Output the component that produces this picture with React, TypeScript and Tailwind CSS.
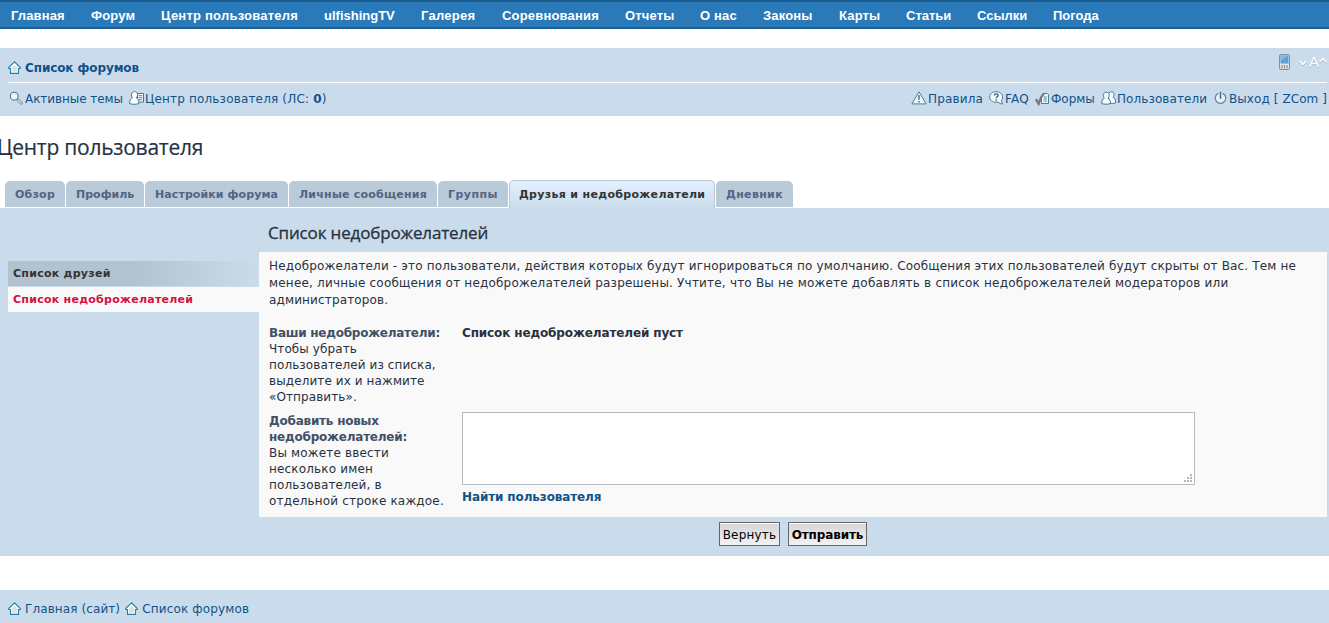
import type { ReactNode } from "react";
import clsx from "clsx";

const navItems = [
  { label: "Главная", className: "w-[54px] tracking-[0.13px]" },
  { label: "Форум", className: "w-[44px] tracking-[0.16px]" },
  { label: "Центр пользователя", className: "w-[137px] tracking-[0.23px]" },
  { label: "ulfishingTV", className: "w-[71px]" },
  { label: "Галерея", className: "w-[55px] tracking-[0.25px]" },
  { label: "Соревнования", className: "w-[97px] tracking-[0.19px]" },
  { label: "Отчеты", className: "w-[49px] tracking-[0.16px]" },
  { label: "О нас", className: "w-[37px] tracking-[0.16px]" },
  { label: "Законы", className: "w-[50px] tracking-[0.16px]" },
  { label: "Карты", className: "w-[41px] tracking-[0.16px]" },
  { label: "Статьи", className: "w-[45px]" },
  { label: "Ссылки", className: "w-[50px]" },
  { label: "Погода", className: "w-[46px]" },
];

const tabs = [
  { label: "Обзор", className: "w-[60px] tracking-[0.23px]" },
  { label: "Профиль", className: "w-[78px]" },
  { label: "Настройки форума", className: "w-[143px] tracking-[0.09px]" },
  { label: "Личные сообщения", className: "w-[148px] tracking-[0.22px]" },
  { label: "Группы", className: "w-[70px] tracking-[0.46px]" },
  { label: "Друзья и недоброжелатели", className: "w-[206px] tracking-[0.32px]", active: true },
  { label: "Дневник", className: "w-[77px] tracking-[0.34px]" },
];

function HomeIcon() {
  return (
    <svg width="13" height="13" viewBox="0 0 13 13" className="mb-0.5 shrink-0">
      <path d="M6.5 .8 .7 6.600v.9h1.800v4.900h8V7.500h1.800v-.9L6.500.8Z" fill="#fff" stroke="#1f80ab" strokeWidth="1.100" />
      <path d="M6.500 4 4 6.600v4.200h5V6.600L6.500 4Z" fill="#e0dfe0" />
    </svg>
  );
}

function SearchIcon() {
  return (
    <svg width="14" height="14" viewBox="0 0 14 14" className="mb-0.5 shrink-0">
      <path d="m8.500 8.500 3.800 3.800" stroke="#64869b" strokeWidth="2.800" strokeLinecap="round" />
      <path d="m9 9 3.200 3.200" stroke="#e9eff3" strokeWidth="1.200" strokeLinecap="round" />
      <circle cx="5.200" cy="5.200" r="3.900" fill="#eef4f8" stroke="#4f7690" strokeWidth="1.100" />
    </svg>
  );
}

function UserCardIcon() {
  return (
    <svg width="16" height="14" viewBox="0 0 16 14" className="mb-0.5 shrink-0">
      <path d="M8.500 2.500h6v8.500h-6z" fill="#fff" stroke="#3c7999" />
      <path d="M9.500 4.700h3.800M9.500 6.700h3.800M9.500 8.700h3.800" stroke="#3c7999" strokeWidth=".9" />
      <path
        d="M3.500 6.700C1.300 7.500.6 9.500.6 12.500c2.700 1.100 6.900 1.100 9.300 0 0-3-.8-5-2.700-5.800 1.300-1.100 1.500-2.500 1.300-3.700C8.100 1.300 7 .6 5.500.6S2.800 1.500 2.500 3c-.2 1.400 0 2.800 1 3.700Z"
        fill="#fff"
        stroke="#3c7999"
      />
    </svg>
  );
}

function WarningIcon() {
  return (
    <svg width="16" height="14" viewBox="0 0 16 14" className="mb-0.5 shrink-0">
      <path d="M8 .8 15.100 12.900H.9L8 .8Z" fill="#f4f9fc" stroke="#447f9e" strokeLinejoin="round" />
      <path d="M8 4v4.800M8 10v1.600" stroke="#447489" strokeWidth="1.500" />
    </svg>
  );
}

function QuestionIcon() {
  return (
    <svg width="15" height="14" viewBox="0 0 15 14" className="mb-0.5 shrink-0">
      <path
        d="M7 .7C3.500.7.7 2.800.7 6s2.800 5.300 6.300 5.300c.7 0 1.400-.1 2-.3 1.200 1.300 2.700 2 4.800 2-.8-1-1.300-2.200-1.400-3.400.8-.9 1.200-2.200 1.200-3.600C13.600 2.800 10.500.7 7 .7Z"
        fill="#f4f9fc"
        stroke="#447f9e"
      />
      <path d="M5.200 4.500c.1-1.100.9-1.700 1.900-1.700 1.200 0 2 .7 2 1.600 0 1.300-1.900 1.400-1.900 2.900" fill="none" stroke="#315f78" strokeWidth="1.300" />
      <path d="M7.200 8.300v1.400" stroke="#315f78" strokeWidth="1.400" />
    </svg>
  );
}

function FormsIcon() {
  return (
    <svg width="15" height="14" viewBox="0 0 15 14" className="shrink-0">
      <path d="M8.500 1.500h3.800l1.200 1.300v8.700h-7V5Z" fill="#f4f9fc" stroke="#447f9e" />
      <path d="M8.500 5h3.500M8.500 7h3.500M8.500 9h3.500" stroke="#447f9e" strokeWidth=".9" />
      <path d="M.8 7.200 3.600 11.700C4.600 7.500 6.200 4.300 9 1.300" fill="none" stroke="#777" strokeWidth="2.200" />
    </svg>
  );
}

function UsersIcon() {
  return (
    <svg width="16" height="14" viewBox="0 0 16 14" className="mb-0.5 shrink-0" fill="#f7fbfd" stroke="#3c7999">
      <path d="M7.500 5.500C6.800 3 8 .7 10.400.7c3 0 3.300 3.800 1.700 5.500 1.900.7 2.600 2.800 2.600 5.600-1.800.9-4.700.9-6.400.2Z" />
      <path d="M3.400 7.200C1.400 8 .7 10 .7 12.600c2.400.8 6.200.8 8.800 0 0-2.600-.8-4.600-2.700-5.400 1.300-1.100 1.500-2.500 1.300-3.700C7.700 1.900 6.600 1.200 5.200 1.200S2.700 2 2.400 3.500c-.2 1.400 0 2.800 1 3.700Z" />
    </svg>
  );
}

function PowerIcon() {
  return (
    <svg width="13" height="14" viewBox="0 0 13 14" className="mb-0.5 shrink-0">
      <circle cx="6.500" cy="7.200" r="5.200" fill="#e6eff5" />
      <path d="M4.300 2.300a5.300 5.300 0 1 0 4.400 0" fill="none" stroke="#63889d" strokeWidth="1.300" />
      <path d="M6.500 .8v7" stroke="#456f87" strokeWidth="1.500" />
    </svg>
  );
}

function PhoneIcon() {
  return (
    <svg width="11" height="16" viewBox="0 0 11 16" className="shrink-0">
      <rect x=".5" y=".5" width="10" height="15" rx="1.500" fill="#e6e6e6" stroke="#8b8f94" />
      <path d="M1.500 1.500h8v8h-8z" fill="#5d9fd6" />
      <path d="M1.500 1.500h8l-8 6z" fill="#83b7e2" />
      <path d="M3 11v3.500M5.500 11v3.500M8 11v3.500" stroke="#9a8a8a" strokeWidth="1.200" />
    </svg>
  );
}

function FontSizeIcon() {
  return (
    <span className="flex h-4 items-center text-white [filter:drop-shadow(0_1px_0_#a3b2bf)]">
      <svg width="8" height="6" viewBox="0 0 8 6" className="mt-0.5" fill="none" stroke="#fff" strokeWidth="1.600">
        <path d="m.7 1 3.300 3.300L7.300 1" />
      </svg>
      <span className="ml-0.5 w-[10px] text-[15px] leading-4 font-['Liberation_Sans',sans-serif]">A</span>
      <svg width="8" height="6" viewBox="0 0 8 6" className="mb-1" fill="none" stroke="#fff" strokeWidth="1.600">
        <path d="m.7 5 3.300-3.300L7.300 5" />
      </svg>
    </span>
  );
}

type IconLinkProps = {
  icon: ReactNode;
  children: ReactNode;
  className?: string;
};

function IconLink({ icon, children, className }: IconLinkProps) {
  return (
    <a href="#" className={clsx("flex shrink-0 items-center whitespace-nowrap text-[#105289]", className)}>
      {icon}
      {children}
    </a>
  );
}

function TopNav() {
  return (
    <nav className="flex h-[29px] gap-[26px] border-t-2 border-b-2 border-t-[#1b5c8f] border-b-[#1f5f92] bg-[#2a7ab9] pl-[11px] font-['Liberation_Sans',Arial,sans-serif] text-[13px] leading-[27px] font-bold text-white">
      {navItems.map((item) => (
        <a key={item.label} href="#" className={clsx("shrink-0 whitespace-nowrap", item.className)}>
          {item.label}
        </a>
      ))}
    </nav>
  );
}

function Header() {
  return (
    <header className="mt-[19px] h-[68px] bg-[#cadceb] pr-0.5 pl-2">
      <div className="flex h-[35px] justify-between border-b border-white">
        <IconLink icon={<HomeIcon />} className="h-[40px] gap-1 font-bold tracking-[-0.1px]">
          <span>Список форумов</span>
        </IconLink>
        <div className="flex h-4 gap-[9px] pt-1.5">
          <PhoneIcon />
          <FontSizeIcon />
        </div>
      </div>
      <div className="flex h-[31px] items-center justify-between">
        <div className="flex gap-1.5 pl-px">
          <IconLink icon={<SearchIcon />} className="w-[114px] gap-0.5 tracking-[-0.07px]">
            <span>Активные темы</span>
          </IconLink>
          <IconLink icon={<UserCardIcon />} className="tracking-[0.17px]">
            <span>
              Центр пользователя (ЛС: <strong>0</strong>)
            </span>
          </IconLink>
        </div>
        <div className="flex">
          <IconLink icon={<WarningIcon />} className="w-[78px] gap-px tracking-[0.16px]">
            Правила
          </IconLink>
          <IconLink icon={<QuestionIcon />} className="w-[46px] gap-px tracking-[0.25px]">
            FAQ
          </IconLink>
          <IconLink icon={<FormsIcon />} className="w-[66px] gap-px">
            Формы
          </IconLink>
          <IconLink icon={<UsersIcon />} className="w-[113px] tracking-[0.08px]">
            Пользователи
          </IconLink>
          <IconLink icon={<PowerIcon />} className="w-[113px] gap-0.5 tracking-[0.08px]">
            Выход [ ZCom ]
          </IconLink>
        </div>
      </div>
    </header>
  );
}

function Tabs() {
  return (
    <ul className="flex h-[28px] items-start gap-px pl-[5px] text-[11px] font-bold">
      {tabs.map((tab) => (
        <li
          key={tab.label}
          className={clsx(
            "shrink-0 rounded-t-[5px] whitespace-nowrap",
            tab.className,
            tab.active
              ? "h-[28px] border border-b-0 border-[#b9cad8] bg-linear-to-b from-[#e3f1ff] to-[#cadceb] pl-[9px] leading-[27px] text-[#333]"
              : "mt-px h-[26px] bg-[#b9cad8] pl-2.5 leading-[27px] text-[#536482]"
          )}
        >
          {tab.label}
        </li>
      ))}
    </ul>
  );
}

function Sidebar() {
  return (
    <aside className="w-[251px] shrink-0 pt-[53px] text-[11px] leading-[26px] font-bold tracking-[0.26px]">
      <a href="#" className="block h-[25px] bg-linear-to-r from-[#b2c2cf] from-50% to-[#cadceb] pl-[5px] text-[#333]">
        Список друзей
      </a>
      <a href="#" className="mt-px block h-[25px] bg-[#f9f9f9] pl-[5px] text-[#d31141]">
        Список недоброжелателей
      </a>
    </aside>
  );
}

function FoesForm() {
  return (
    <section className="flex-1">
      <h3 className="h-[44px] pt-3 pl-[9px] font-['Open_Sans',sans-serif] text-[17px] leading-[25px] tracking-[-0.15px] text-[#28313f] [-webkit-text-stroke:0.3px_#28313f]">
        Список недоброжелателей
      </h3>
      <div className="h-[265px] bg-[#f9f9f9] px-2.5 pt-1.5 text-[#28313f]">
        <p className="leading-[17px] whitespace-nowrap">
          <span className="tracking-[0.16px]">
            Недоброжелатели - это пользователи, действия которых будут игнорироваться по умолчанию. Сообщения этих пользователей будут скрыты от Вас. Тем не
          </span>
          <br />
          <span className="tracking-[0.2px]">
            менее, личные сообщения от недоброжелателей разрешены. Учтите, что Вы не можете добавлять в список недоброжелателей модераторов или
          </span>
          <br />
          <span className="tracking-[0.15px]">администраторов.</span>
        </p>
        <dl className="mt-4 grid grid-cols-[193px_733px] gap-y-2 leading-4">
          <dt className="whitespace-nowrap">
            <label className="font-bold tracking-[-0.25px] text-[#425067]">Ваши недоброжелатели:</label>
            <p className="tracking-[0.1px]">
              Чтобы убрать
              <br />
              пользователей из списка,
              <br />
              выделите их и нажмите
              <br />
              «Отправить».
            </p>
          </dt>
          <dd className="font-bold tracking-[-0.13px]">Список недоброжелателей пуст</dd>
          <dt className="whitespace-nowrap">
            <label htmlFor="foes" className="block font-bold tracking-[-0.22px] text-[#425067]">
              Добавить новых
              <br />
              недоброжелателей:
            </label>
            <p className="tracking-[0.17px]">
              Вы можете ввести
              <br />
              несколько имен
              <br />
              пользователей, в
              <br />
              отдельной строке каждое.
            </p>
          </dt>
          <dd className="-mt-px">
            <div className="relative h-[73px]">
              <textarea id="foes" className="block h-[73px] w-full resize-none border border-[#b4bac0] bg-white" />
              <svg width="8" height="8" viewBox="0 0 8 8" className="absolute right-[3px] bottom-[3px]" fill="#b5b5b5">
                <path d="M6 0h2v2H6zM3 3h2v2H3zM6 3h2v2H6zM0 6h2v2H0zM3 6h2v2H3zM6 6h2v2H6z" />
              </svg>
            </div>
            <a href="#" className="mt-1 block font-bold tracking-[-0.12px] text-[#105289]">
              Найти пользователя
            </a>
          </dd>
        </dl>
      </div>
      <div className="flex gap-2 pt-[5px] pl-[460px] text-black">
        <button className="h-6 w-[61px] border border-[#666] bg-linear-to-b from-[#d6d6d6] to-[#f2f2f2] pt-px tracking-[0.2px] shadow-[inset_0_1px_0_#fff]">
          Вернуть
        </button>
        <button className="h-6 w-[79px] border border-[#666] bg-linear-to-b from-[#d6d6d6] to-[#f2f2f2] pt-px font-bold tracking-[-0.12px] whitespace-nowrap shadow-[inset_0_1px_0_#fff]">
          Отправить
        </button>
      </div>
    </section>
  );
}

export default function App() {
  return (
    <div className="h-[623px] overflow-hidden bg-white font-['DejaVu_Sans',Verdana,sans-serif] text-[12px]">
      <TopNav />
      <Header />
      <h2 className="-ml-[3px] h-16 pt-4 font-['Open_Sans',sans-serif] text-[21px] leading-[30px] tracking-[-0.25px] text-[#28313f] [-webkit-text-stroke:0.2px_#28313f]">
        Центр пользователя
      </h2>
      <Tabs />
      <main className="flex h-[348px] bg-[#cadceb] pr-0.5 pl-2">
        <Sidebar />
        <FoesForm />
      </main>
      <footer className="mt-[34px] flex h-[38px] items-center gap-[5px] bg-[#cadceb] pl-2">
        <IconLink icon={<HomeIcon />} className="gap-1 tracking-[0.1px]">
          Главная (сайт)
        </IconLink>
        <IconLink icon={<HomeIcon />} className="gap-1 tracking-[0.16px]">
          Список форумов
        </IconLink>
      </footer>
    </div>
  );
}
